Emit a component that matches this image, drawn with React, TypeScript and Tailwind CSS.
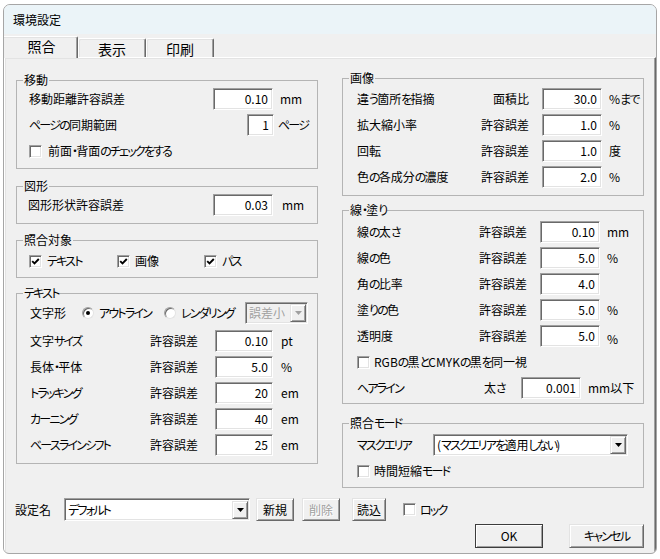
import React from "react";

const sunken =
  "border border-t-[#a0a0a0] border-l-[#a0a0a0] border-r-white border-b-white shadow-[inset_1px_1px_0_#696969,inset_-1px_-1px_0_#e3e3e3]";
const raised =
  "border border-t-[#e3e3e3] border-l-[#e3e3e3] border-r-[#696969] border-b-[#696969] shadow-[inset_1px_1px_0_#ffffff,inset_-1px_-1px_0_#a0a0a0]";

// narrow the kana runs (the reference UI font has narrow proportional kana)
const t = (s: string) =>
  s.split(/([\u3040-\u30ff]+)/).map((part, i) =>
    /[\u3040-\u30ff]/.test(part) ? (
      <span key={i} className="tracking-[-1.8px]">
        {part}
      </span>
    ) : (
      <React.Fragment key={i}>{part}</React.Fragment>
    )
  );

const Input = ({ value, className = "w-[60px]" }: { value: string; className?: string }) => (
  <div className={`h-[22px] ${className} shrink-0 bg-white ${sunken} flex items-center justify-end pr-[4px]`}>
    {value}
  </div>
);

const Check = ({ checked }: { checked?: boolean }) => (
  <span className={`w-[13px] h-[13px] shrink-0 bg-white ${sunken} flex items-center justify-center`}>
    {checked && (
      <svg width="9" height="9" viewBox="0 0 9 9">
        <path d="M1.2 4.2 L3.5 6.5 L7.8 2" fill="none" stroke="#000" strokeWidth="1.9" />
      </svg>
    )}
  </span>
);

const Radio = ({ checked }: { checked?: boolean }) => (
  <span className="w-[12px] h-[12px] shrink-0 rounded-full bg-white border border-t-[#a0a0a0] border-l-[#a0a0a0] border-r-[#e3e3e3] border-b-[#e3e3e3] shadow-[inset_1px_1px_0_#696969] flex items-center justify-center">
    {checked && <span className="w-[4px] h-[4px] rounded-full bg-black" />}
  </span>
);

const Arrow = ({ disabled }: { disabled?: boolean }) => (
  <div className={`w-[16px] h-[18px] shrink-0 bg-[#f0f0f0] ${raised} flex items-center justify-center`}>
    <svg width="7" height="4" viewBox="0 0 7 4">
      <polygon points="0,0 7,0 3.5,4" fill={disabled ? "#a0a0a0" : "#000"} />
    </svg>
  </div>
);

const Btn = ({
  children,
  className,
  disabled,
}: {
  children: React.ReactNode;
  className: string;
  disabled?: boolean;
}) => (
  <div
    className={`h-[23px] ${className} shrink-0 bg-[#f0f0f0] ${raised} flex items-center justify-center ${
      disabled ? "text-[#a0a0a0] [text-shadow:1px_1px_0_#ffffff]" : ""
    }`}
  >
    {children}
  </div>
);

const Group = ({
  label,
  className,
  children,
}: {
  label: string;
  className: string;
  children: React.ReactNode;
}) => (
  <div className={`relative border border-[#b4b4b4] ${className}`}>
    <span className="absolute left-[6px] top-[-9px] px-[1px] bg-[#f0f0f0] leading-[16px]">{t(label)}</span>
    {children}
  </div>
);

const TolRow = ({ label, value, unit }: { label: string; value: string; unit?: string }) => (
  <div className="flex items-center h-[26px]">
    <span className="w-[120px] shrink-0">{t(label)}</span>
    <span className="w-[65px] shrink-0">許容誤差</span>
    <Input value={value} className="w-[58px]" />
    <span className="ml-[8px]">{unit}</span>
  </div>
);

const RTolRow = ({
  label,
  mid = "許容誤差",
  value,
  unit,
  unitClass = "",
}: {
  label: string;
  mid?: string;
  value: string;
  unit?: string;
  unitClass?: string;
}) => (
  <div className="flex items-center h-[26px]">
    <span className="w-[121px] shrink-0">{t(label)}</span>
    <span className="w-[49px] shrink-0 text-right">{mid}</span>
    <Input value={value} className="ml-[13px] w-[60px]" />
    <span className={`ml-[7px] ${unitClass}`}>{unit}</span>
  </div>
);

export default function App() {
  return (
    <div className="w-[660px] h-[559px] bg-white pt-[4px] pl-[3px] text-[12px] leading-[16px] text-black font-['Noto_Sans_CJK_JP','Noto_Sans',sans-serif] [font-feature-settings:'palt']">
      <div className="w-[654px] h-[550px] border border-[#a6a6a6] rounded-t-[7px] rounded-b-[6px] overflow-hidden bg-[#f0f0f0] flex flex-col">
        {/* title bar */}
        <div className="h-[29px] shrink-0 bg-[#ebf4f8] flex items-center pl-[9px]">環境設定</div>

        {/* tab strip */}
        <div className="h-[23px] shrink-0 flex items-end text-[14px]">
          <div className="relative z-10 w-[74px] h-[22px] mb-[-1px] bg-[#f0f0f0] border-t border-r border-t-white border-r-[#696969] shadow-[inset_-1px_0_0_#a0a0a0,inset_0_1px_0_#e3e3e3] rounded-tr-[2px] flex items-start justify-center pt-[1px] pl-[2px]">
            照合
          </div>
          <div className="w-[68px] h-[19px] border-t border-l border-r border-t-white border-l-white border-r-[#696969] shadow-[inset_-1px_0_0_#a0a0a0,inset_1px_1px_0_#e3e3e3] rounded-t-[2px] flex items-center justify-center pt-[2px]">
            表示
          </div>
          <div className="w-[68px] h-[19px] border-t border-l border-r border-t-white border-l-white border-r-[#696969] shadow-[inset_-1px_0_0_#a0a0a0,inset_1px_1px_0_#e3e3e3] rounded-t-[2px] flex items-center justify-center pt-[2px]">
            印刷
          </div>
        </div>

        {/* panel */}
        <div className="flex-1 border-t border-l border-r border-t-white border-l-white border-r-[#696969] shadow-[inset_-1px_0_0_#a0a0a0,inset_1px_1px_0_#e3e3e3]">
          <div className="flex items-start gap-[24px] pl-[11px]">
            {/* left column */}
            <div className="w-[302px] mt-[22px] flex flex-col">
              <Group label="移動" className="h-[89px] pt-[5px] pl-[12px]">
                <div className="flex items-center h-[26px]">
                  <span className="w-[184px] shrink-0">移動距離許容誤差</span>
                  <Input value="0.10" />
                  <span className="ml-[7px]">mm</span>
                </div>
                <div className="flex items-center h-[26px]">
                  <span className="w-[218px] shrink-0">{t("ページの同期範囲")}</span>
                  <Input value="1" className="w-[27px]" />
                  <span className="ml-[4px]">{t("ページ")}</span>
                </div>
                <div className="flex items-center h-[26px]">
                  <Check />
                  <span className="ml-[6px]">{t("前面・背面のチェックをする")}</span>
                </div>
              </Group>

              <Group label="図形" className="mt-[17px] h-[38px] pt-[6px] pl-[11px]">
                <div className="flex items-center h-[24px]">
                  <span className="w-[185px] shrink-0">図形形状許容誤差</span>
                  <Input value="0.03" />
                  <span className="ml-[9px]">mm</span>
                </div>
              </Group>

              <Group label="照合対象" className="mt-[16px] h-[38px] pt-[8px] pl-[12px]">
                <div className="flex items-center h-[24px]">
                  <div className="w-[88px] flex items-center">
                    <Check checked />
                    <span className="ml-[5px]">{t("テキスト")}</span>
                  </div>
                  <div className="w-[87px] flex items-center">
                    <Check checked />
                    <span className="ml-[5px]">画像</span>
                  </div>
                  <div className="flex items-center">
                    <Check checked />
                    <span className="ml-[5px]">{t("パス")}</span>
                  </div>
                </div>
              </Group>

              <Group label="テキスト" className="mt-[15px] h-[171px] pt-[8px] pl-[13px]">
                <div className="flex items-center h-[22px]">
                  <span className="w-[52px] shrink-0">文字形</span>
                  <div className="w-[82px] flex items-center">
                    <Radio checked />
                    <span className="ml-[5px]">{t("アウトライン")}</span>
                  </div>
                  <div className="w-[81px] flex items-center">
                    <Radio />
                    <span className="ml-[5px]">{t("レンダリング")}</span>
                  </div>
                  <div className={`w-[63px] h-[22px] bg-[#f0f0f0] ${sunken} flex items-center pl-[3px] pr-[1px]`}>
                    <span className="flex-1 text-[#a0a0a0]">誤差小</span>
                    <Arrow disabled />
                  </div>
                </div>
                <div className="mt-[4px]">
                  <TolRow label="文字サイズ" value="0.10" unit="pt" />
                  <TolRow label="長体・平体" value="5.0" unit="%" />
                  <TolRow label="トラッキング" value="20" unit="em" />
                  <TolRow label="カーニング" value="40" unit="em" />
                  <TolRow label="ベースラインシフト" value="25" unit="em" />
                </div>
              </Group>
            </div>

            {/* right column */}
            <div className="w-[302px] mt-[20px] flex flex-col">
              <Group label="画像" className="h-[118px] pt-[7px] pl-[14px]">
                <div className="flex items-center h-[26px]">
                  <span className="w-[121px] shrink-0">{t("違う箇所を指摘")}</span>
                  <span className="w-[51px] shrink-0 text-right">面積比</span>
                  <Input value="30.0" className="ml-[13px] w-[60px]" />
                  <span className="ml-[7px]">{t("%まで")}</span>
                </div>
                <div className="flex items-center h-[26px]">
                  <span className="w-[121px] shrink-0">拡大縮小率</span>
                  <span className="w-[51px] shrink-0 text-right">許容誤差</span>
                  <Input value="1.0" className="ml-[13px] w-[60px]" />
                  <span className="ml-[7px]">%</span>
                </div>
                <div className="flex items-center h-[26px]">
                  <span className="w-[121px] shrink-0">回転</span>
                  <span className="w-[51px] shrink-0 text-right">許容誤差</span>
                  <Input value="1.0" className="ml-[13px] w-[60px]" />
                  <span className="ml-[7px]">度</span>
                </div>
                <div className="flex items-center h-[26px]">
                  <span className="w-[121px] shrink-0">{t("色の各成分の濃度")}</span>
                  <span className="w-[51px] shrink-0 text-right">許容誤差</span>
                  <Input value="2.0" className="ml-[13px] w-[60px]" />
                  <span className="ml-[7px]">%</span>
                </div>
              </Group>

              <Group label="線・塗り" className="mt-[14px] h-[194px] pt-[8px] pl-[14px]">
                <RTolRow label="線の太さ" value="0.10" unit="mm" />
                <RTolRow label="線の色" value="5.0" unit="%" />
                <RTolRow label="角の比率" value="4.0" />
                <RTolRow label="塗りの色" value="5.0" unit="%" />
                <RTolRow label="透明度" value="5.0" unit="%" unitClass="mt-[5px]" />
                <div className="flex items-center h-[26px]">
                  <Check />
                  <span className="ml-[4px]">{t("RGBの黒とCMYKの黒を同一視")}</span>
                </div>
                <div className="flex items-center h-[26px]">
                  <span className="w-[127px] shrink-0">{t("ヘアライン")}</span>
                  <span className="w-[37px] shrink-0">{t("太さ")}</span>
                  <Input value="0.001" />
                  <span className="ml-[7px]">mm以下</span>
                </div>
              </Group>

              <Group label="照合モード" className="mt-[19px] h-[65px] pt-[8px] pl-[14px]">
                <div className="flex items-center h-[26px]">
                  <span className="w-[76px] shrink-0">{t("マスクエリア")}</span>
                  <div className={`w-[195px] h-[22px] bg-white ${sunken} flex items-center pl-[3px] pr-[1px]`}>
                    <span className="flex-1">{t("(マスクエリアを適用しない)")}</span>
                    <Arrow />
                  </div>
                </div>
                <div className="flex items-center h-[26px]">
                  <Check />
                  <span className="ml-[4px]">{t("時間短縮モード")}</span>
                </div>
              </Group>
            </div>
          </div>

          {/* bottom row */}
          <div className="mt-[10px] h-[23px] flex items-center pl-[10px]">
            <span className="w-[49px] shrink-0">設定名</span>
            <div className={`w-[186px] h-[23px] bg-white ${sunken} flex items-center pl-[3px] pr-[1px]`}>
              <span className="flex-1">{t("デフォルト")}</span>
              <Arrow />
            </div>
            <Btn className="ml-[6px] w-[38px]">新規</Btn>
            <Btn className="ml-[8px] w-[38px]" disabled>
              削除
            </Btn>
            <Btn className="ml-[12px] w-[34px]">読込</Btn>
            <span className="ml-[17px]">
              <Check />
            </span>
            <span className="ml-[4px]">{t("ロック")}</span>
          </div>

          {/* OK / Cancel */}
          <div className="mt-[3px] h-[24px] flex items-center pl-[470px] gap-[26px]">
            <div className="w-[68px] h-[24px] bg-[#f0f0f0] border border-[#3c3c3c] shadow-[inset_1px_1px_0_#ffffff,inset_-1px_-1px_0_#a0a0a0] flex items-center justify-center">
              OK
            </div>
            <Btn className="w-[75px] h-[24px]">{t("キャンセル")}</Btn>
          </div>
        </div>
      </div>
    </div>
  );
}
